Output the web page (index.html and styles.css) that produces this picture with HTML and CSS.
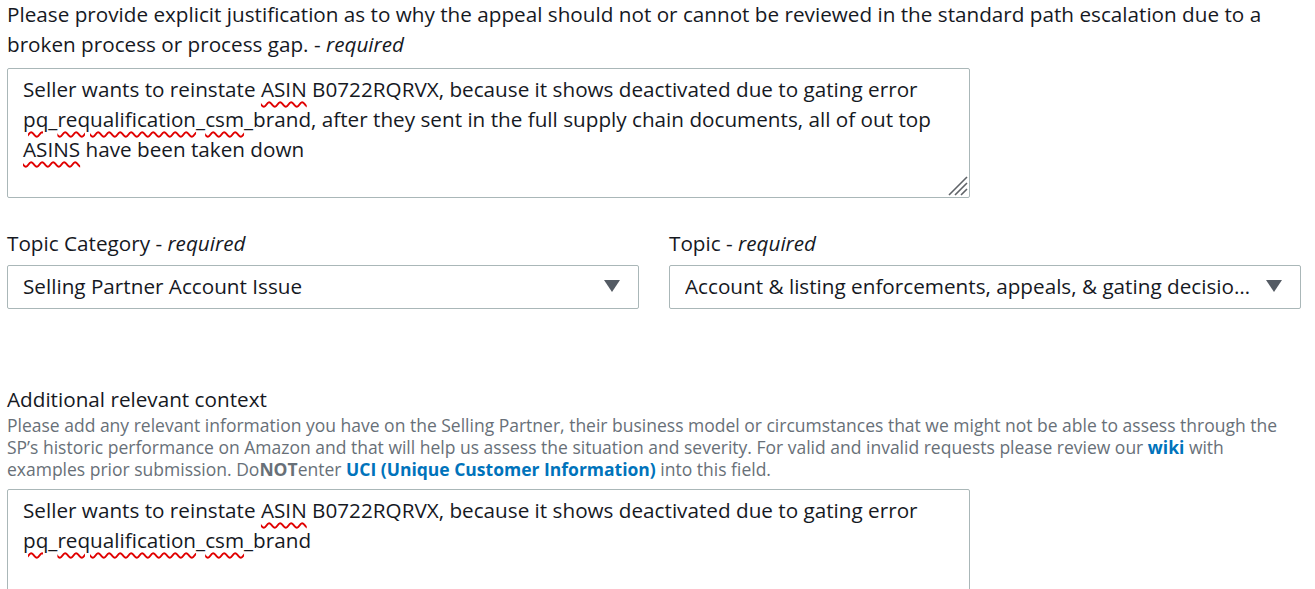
FILE: index.html
```html
<!DOCTYPE html>
<html lang="en">
<head>
<meta charset="utf-8">
<title>Appeal form</title>
<link rel="stylesheet" href="styles.css">
</head>
<body>
<div class="form">
  <div class="field">
    <div class="label first-label">Please provide explicit justification as to why the appeal should not or cannot be reviewed in the standard path escalation due to a<br>broken process or process gap. - <i>required</i></div>
    <div class="textarea ta-first">
      <div class="ta-text">Seller wants to reinstate <span class="sp">ASIN</span> B0722RQRVX, because it shows deactivated due to gating error<br><span class="sp">pq</span>_<span class="sp">requalification</span>_<span class="sp">csm</span>_brand, after they sent in the full supply chain documents, all of out top<br><span class="sp">ASINS</span> have been taken down</div>
      <svg class="grip" width="22" height="22" viewBox="0 0 22 22" aria-hidden="true">
        <path d="M21 3 L3 21 M21 9 L9 21 M21 15 L15 21" stroke="#5f6368" stroke-width="1.6" fill="none"/>
      </svg>
    </div>
  </div>

  <div class="row">
    <div class="col">
      <div class="label">Topic Category - <i>required</i></div>
      <div class="select">
        <span class="sel-text">Selling Partner Account Issue</span>
        <span class="caret"></span>
      </div>
    </div>
    <div class="col">
      <div class="label">Topic - <i>required</i></div>
      <div class="select">
        <span class="sel-text">Account &amp; listing enforcements, appeals, &amp; gating decisions</span>
        <span class="caret"></span>
      </div>
    </div>
  </div>

  <div class="field context">
    <div class="label">Additional relevant context</div>
    <div class="help">Please add any relevant information you have on the Selling Partner, their business model or circumstances that we might not be able to assess through the<br>SP’s historic performance on Amazon and that will help us assess the situation and severity. For valid and invalid requests please review our <a class="link" href="#">wiki</a> with<br>examples prior submission. Do<b>NOT</b>enter <a class="link" href="#">UCI (Unique Customer Information)</a> into this field.</div>
    <div class="textarea ta-second">
      <div class="ta-text">Seller wants to reinstate <span class="sp">ASIN</span> B0722RQRVX, because it shows deactivated due to gating error<br><span class="sp">pq</span>_<span class="sp">requalification</span>_<span class="sp">csm</span>_brand</div>
    </div>
  </div>
</div>
</body>
</html>
```

FILE: styles.css
```css
html, body {
  margin: 0;
  padding: 0;
  background: #ffffff;
}

body {
  font-family: "Open Sans", Roboto, "Liberation Sans", sans-serif;
  color: #16191f;
  overflow: hidden;
}

.form {
  padding: 0 7px;
  width: 1294px;
}

.label {
  font-size: 20.7px;
  line-height: 30px;
  white-space: nowrap;
}

.first-label {
  margin-top: -1px;
}

.label i {
  font-style: italic;
}

.textarea {
  position: relative;
  box-sizing: border-box;
  width: 963px;
  border: 1px solid #aab7b8;
  border-radius: 2px;
  padding: 5px 15px;
  background: #fff;
}

.ta-first {
  margin-top: 9px;
  height: 130px;
}

.ta-text {
  font-size: 20.7px;
  line-height: 30px;
  white-space: nowrap;
}

.sp {
  text-decoration: underline wavy #e00000;
  text-decoration-thickness: 1.5px;
  text-underline-offset: 4px;
}

.grip {
  position: absolute;
  right: 1px;
  bottom: 1px;
}

.row {
  display: grid;
  grid-template-columns: 632px 632px;
  column-gap: 30px;
  margin-top: 30px;
}

.select {
  box-sizing: border-box;
  height: 44px;
  margin-top: 7px;
  border: 1px solid #aab7b8;
  border-radius: 2px;
  padding: 0 18px 2px 15px;
  display: flex;
  align-items: center;
  gap: 14px;
}

.sel-text {
  flex: 1;
  min-width: 0;
  font-size: 20.7px;
  line-height: 30px;
  white-space: nowrap;
  overflow: hidden;
  text-overflow: ellipsis;
}

.caret {
  width: 0;
  height: 0;
  border-left: 8px solid transparent;
  border-right: 8px solid transparent;
  border-top: 12px solid #545b64;
  flex: none;
}

.context {
  margin-top: 75px;
}

.help {
  font-size: 17.5px;
  line-height: 22px;
  color: #687078;
  white-space: nowrap;
}

.help b {
  font-weight: 700;
}

.link {
  color: #0073bb;
  font-weight: 700;
  text-decoration: none;
}

.ta-second {
  margin-top: 9px;
  height: 140px;
}
```
